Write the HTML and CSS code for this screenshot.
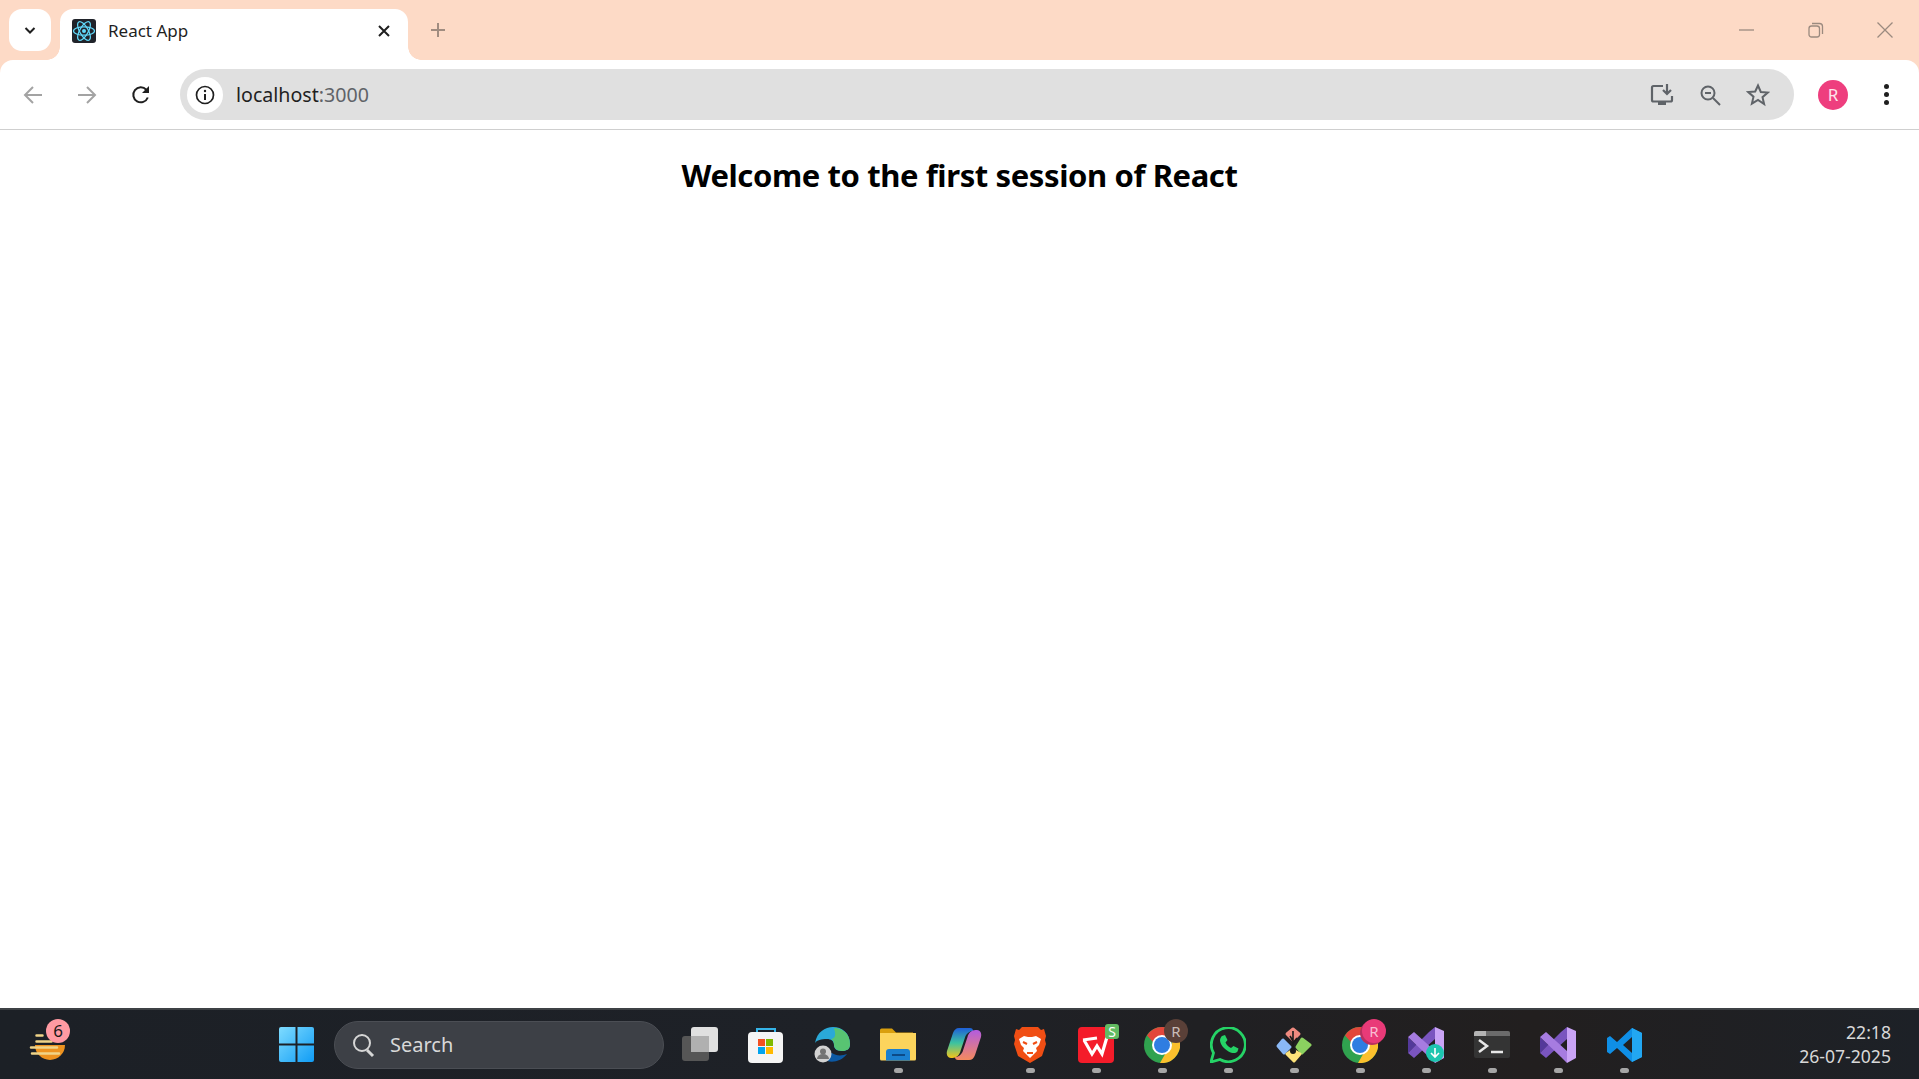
FILE: index.html
```html
<!DOCTYPE html>
<html lang="en">
<head>
    <meta charset="UTF-8">
    <title>React App</title>
    <link rel="stylesheet" href="styles.css">
</head>
<body>
    <svg class="sprites" width="0" height="0">
        <symbol id="chrome" viewBox="0 0 36 36">
            <circle cx="18" cy="18" r="18" fill="#30a24f"/>
            <path d="M18 0a18 18 0 0 1 15.600 9H18a9 9 0 0 0-8.600 6.400L3 8.500A18 18 0 0 1 18 0z" fill="#e2463a"/>
            <path d="M33.600 9A18 18 0 0 1 16 35.900l7.600-13.200A9 9 0 0 0 26 9z" fill="#fbc02d"/>
            <circle cx="18" cy="18" r="10" fill="#fff"/>
            <circle cx="18" cy="18" r="8" fill="#2f7de1"/>
        </symbol>
        <symbol id="vs" viewBox="0 0 36 36">
            <path d="M0 10l8.400 8L0 26z" fill="#54399a"/>
            <path d="M0 26l6 5L27 12V0l-6 5z" fill="#7a55bf"/>
            <path d="M0 10l6-5 21 19v12l-6-6z" fill="#a67ce0"/>
            <path d="M27 0l9 4v27l-9 5z" fill="#caa4f6"/>
        </symbol>
    </svg>

    <div class="chrome">
        <header class="tabstrip">
            <button class="tab-search">
                <svg width="14" height="14" viewBox="0 0 14 14"><path d="M2.500 5L7 9.500 11.500 5" fill="none" stroke="#1f1f1f" stroke-width="2"/></svg>
            </button>
            <div class="tab">
                <svg class="favicon" width="24" height="24" viewBox="0 0 24 24">
                    <rect width="24" height="24" rx="3" fill="#20232a"/>
                    <g fill="none" stroke="#61dafb" stroke-width="1.200">
                        <ellipse cx="12" cy="12" rx="10.500" ry="4.200"/>
                        <ellipse cx="12" cy="12" rx="10.500" ry="4.200" transform="rotate(60 12 12)"/>
                        <ellipse cx="12" cy="12" rx="10.500" ry="4.200" transform="rotate(120 12 12)"/>
                    </g>
                    <circle cx="12" cy="12" r="2" fill="#61dafb"/>
                </svg>
                <span class="tab-title">React App</span>
                <svg class="tab-close" width="12" height="12" viewBox="0 0 12 12"><path d="M1 1l10 10M11 1L1 11" stroke="#1f1f1f" stroke-width="2"/></svg>
            </div>
            <svg class="new-tab" width="16" height="16" viewBox="0 0 16 16"><path d="M8 1v14M1 8h14" stroke="#a08c80" stroke-width="2"/></svg>
            <div class="window-btns">
                <svg width="16" height="16" viewBox="0 0 16 16"><path d="M0 8h15" stroke="#9b8a7f" stroke-width="1.300"/></svg>
                <svg width="16" height="16" viewBox="0 0 16 16"><rect x="1" y="4" width="10.500" height="11" rx="2.500" fill="none" stroke="#9b8a7f" stroke-width="1.300"/><path d="M4 1.500h7.500a3 3 0 0 1 3 3V12" fill="none" stroke="#9b8a7f" stroke-width="1.300"/></svg>
                <svg width="16" height="16" viewBox="0 0 16 16"><path d="M.5.500l15 15M15.500.500l-15 15" stroke="#9b8a7f" stroke-width="1.300"/></svg>
            </div>
        </header>

        <nav class="toolbar">
            <svg class="nav-icon" width="20" height="20" viewBox="0 0 20 20"><path d="M19 10H2M10 2l-8 8 8 8" fill="none" stroke="#a3a3a3" stroke-width="2"/></svg>
            <svg class="nav-icon" width="20" height="20" viewBox="0 0 20 20"><path d="M1 10h17M10 2l8 8-8 8" fill="none" stroke="#a3a3a3" stroke-width="2"/></svg>
            <svg class="nav-icon" width="20" height="20" viewBox="0 0 20 20"><path d="M16.800 12.500A7.500 7.500 0 1 1 15.300 4.700L17 6.500" fill="none" stroke="#1f1f1f" stroke-width="2"/><path d="M18 1v7h-7z" fill="#1f1f1f"/></svg>
            <div class="omnibox">
                <span class="site-info">
                    <svg width="20" height="20" viewBox="0 0 20 20"><circle cx="10" cy="10" r="8.500" fill="none" stroke="#1f1f1f" stroke-width="1.700"/><path d="M10 9v6" stroke="#1f1f1f" stroke-width="2"/><circle cx="10" cy="6" r="1.200" fill="#1f1f1f"/></svg>
                </span>
                <span class="url">localhost<span class="url-port">:3000</span></span>
                <span class="omni-actions">
                    <svg width="24" height="24" viewBox="0 0 24 24"><path d="M13 3H3.500A1.500 1.500 0 0 0 2 4.500V17A1.500 1.500 0 0 0 3.500 18.500h17A1.500 1.500 0 0 0 22 17v-4" fill="none" stroke="#5f6368" stroke-width="2.200"/><path d="M8 18h8v4H8z" fill="#5f6368"/><path d="M17 1v9M13 7l4 4 4-4" fill="none" stroke="#5f6368" stroke-width="2.200"/></svg>
                    <svg width="22" height="22" viewBox="0 0 22 22"><circle cx="9" cy="9" r="6.500" fill="none" stroke="#5f6368" stroke-width="2"/><path d="M14 14l7 7" stroke="#5f6368" stroke-width="2"/><path d="M6 9h6" stroke="#5f6368" stroke-width="2"/></svg>
                    <svg width="24" height="24" viewBox="0 0 24 24"><path d="M12 2.500l2.800 6.500 7 .600-5.300 4.600 1.600 6.900L12 17l-6.100 3.600 1.600-6.900-5.300-4.600 7-.600z" fill="none" stroke="#5f6368" stroke-width="2"/></svg>
                </span>
            </div>
            <span class="avatar">R</span>
            <span class="menu-dots"><i></i><i></i><i></i></span>
        </nav>
    </div>

    <main class="page">
        <h1>Welcome to the first session of React</h1>
    </main>

    <footer class="taskbar">
        <div class="weather">
            <svg width="36" height="36" viewBox="0 0 36 36">
                <path d="M6 18h30a15 15 0 0 1-30 0z" fill="#ed9320"/>
                <path d="M7.500 8.500h6M7.500 14.500h15M2 20.500h26M3 26.500h27" stroke="#f0d488" stroke-width="2.500" stroke-linecap="round"/>
            </svg>
            <span class="weather-badge">6</span>
        </div>
        <svg class="start" width="35" height="35" viewBox="0 0 35 35">
            <defs><linearGradient id="win" x1="0" y1="0" x2="1" y2="1"><stop offset="0" stop-color="#7fdcff"/><stop offset="1" stop-color="#109cf5"/></linearGradient></defs>
            <path d="M2 0h14.500v16.500H0V2a2 2 0 0 1 2-2zM18.500 0H33a2 2 0 0 1 2 2v14.500H18.500zM0 18.500h16.500V35H2a2 2 0 0 1-2-2zM18.500 18.500H35V33a2 2 0 0 1-2 2H18.500z" fill="url(#win)"/>
        </svg>
        <div class="search">
            <svg width="24" height="26" viewBox="0 0 24 26"><circle cx="10" cy="11" r="8" fill="none" stroke="#d6d6d6" stroke-width="2"/><path d="M15 18l6 6" stroke="#d6d6d6" stroke-width="3"/></svg>
            <span>Search</span>
        </div>
        <div class="apps">
            <div class="app">
                <svg width="36" height="36" viewBox="0 0 36 36"><rect y="9" width="27" height="25" rx="3" fill="#565656"/><rect x="9" width="27" height="25" rx="3" fill="#e0e0e0"/><rect x="9" y="9" width="18" height="16" fill="#b0b0b0"/></svg>
            </div>
            <div class="app">
                <svg width="36" height="36" viewBox="0 0 36 36"><path d="M9 8V2h18v6" fill="none" stroke="#35b4e8" stroke-width="2"/><rect y="5" width="35" height="31" rx="4" fill="#f5f5f5"/><path d="M10 12h7v7h-7z" fill="#f25022"/><path d="M18 12h7v7h-7z" fill="#7fba00"/><path d="M10 20h7v7h-7z" fill="#00a4ef"/><path d="M18 20h7v7h-7z" fill="#ffb900"/></svg>
            </div>
            <div class="app">
                <svg width="36" height="36" viewBox="0 0 36 36"><path d="M1 16C3 5 11 0 19 0c9 0 17 6 17 17 0 5-3 7-8 7-6 0-8-3-8-6 0-4-3-6-7-6-6 0-10 1-12 4z" fill="#2aa9d8"/><path d="M20 1c9 0 16 6 16 16 0 5-3 7-8 7-5 0-8-3-8-6 0-3-1-5-3-6 6-1 4-7 3-11z" fill="#58c472"/><path d="M9 32c7 5 18 3 24-5-5 2-11 2-15-1-6 1-9 3-9 6z" fill="#0c59a4"/><circle cx="9" cy="27" r="8.500" fill="#d2d2d2"/><circle cx="9" cy="24.500" r="3" fill="#737373"/><path d="M3 32a6 5 0 0 1 12 0z" fill="#737373"/></svg>
            </div>
            <div class="app running">
                <svg width="36" height="36" viewBox="0 0 36 36"><path d="M0 3a1.500 1.500 0 0 1 1.500-1.500H12l4 4h17V30H0z" fill="#d99f0e"/><path d="M0 6h36v26a1.500 1.500 0 0 1-1.500 1.500h-33A1.500 1.500 0 0 1 0 32z" fill="#fcd45c"/><path d="M6 33.500V25a3 3 0 0 1 3-3h18a3 3 0 0 1 3 3v8.500z" fill="#1b80d0"/><path d="M12 28h13" stroke="#0c4a87" stroke-width="2"/></svg>
            </div>
            <div class="app">
                <svg width="36" height="36" viewBox="0 0 36 36">
                    <defs>
                        <linearGradient id="cop1" x1="0" y1="0" x2="0" y2="1"><stop offset="0" stop-color="#1f5fd8"/><stop offset=".5" stop-color="#3cc3a0"/><stop offset="1" stop-color="#f5c518"/></linearGradient>
                        <linearGradient id="cop2" x1="0" y1="0" x2="0" y2="1"><stop offset="0" stop-color="#f58a5e"/><stop offset="1" stop-color="#b25ce0"/></linearGradient>
                    </defs>
                    <path d="M13 1h11c2 0 3 1 3 3-3 0-6 2-7.500 5l-5 15c-1 4-4 7-8 7H5c-3 0-5-3-4-7L7 6c1-3 3-5 6-5z" fill="url(#cop1)"/>
                    <path d="M13 1h11c2 0 3 1 3 3-3 0-6 2-7.500 5l-5 15c-1 4-4 7-8 7H5c-3 0-5-3-4-7L7 6c1-3 3-5 6-5z" fill="url(#cop2)" transform="rotate(180 18 17)"/>
                </svg>
            </div>
            <div class="app running">
                <svg width="32" height="36" viewBox="0 0 32 36"><path d="M8 0h16l3 3 3-1 2 7-1 4 1 4-4 12-12 7-12-7L0 17l1-4-1-4 2-7 3 1z" fill="#f04e14"/><path d="M5 12l5-3 4 1h4l4-1 5 3-2 6-3 3 1 3-7 7-7-7 1-3-3-3z" fill="#fff"/><path d="M9 15l4 2M23 15l-4 2M13 26h6" stroke="#f04e14" stroke-width="2"/></svg>
            </div>
            <div class="app running">
                <svg width="36" height="36" viewBox="0 0 36 36"><rect width="36" height="36" rx="4" fill="#f41c2a"/><path d="M5 13l14-2M6 13l8 14 5-8 5 8 5-17" fill="none" stroke="#fff" stroke-width="3.200"/></svg>
                <span class="wps-s">S</span>
            </div>
            <div class="app running">
                <svg width="36" height="36"><use href="#chrome"/></svg>
                <span class="profile-badge brown">R</span>
            </div>
            <div class="app running">
                <svg width="36" height="36" viewBox="0 0 36 36"><path d="M1 35l2.500-9A17 17 0 1 1 10 32.500z" fill="none" stroke="#25d366" stroke-width="2.800"/><path d="M12 9l3-1 2.500 5-2 2.500c1 2.500 3 4.500 5.500 5.500l2.500-2 5 2.500-1 3c-2 2-5 2-9 0-5-3-8-7-8.500-11 0-2 1-3.500 2-4.500z" fill="#25d366"/></svg>
            </div>
            <div class="app running">
                <svg width="36" height="36" viewBox="0 0 36 36">
                    <g stroke-width="3" stroke-linejoin="round">
                        <path d="M11 7l6-5 6 5-6 6z" fill="#ef8a80" stroke="#ef8a80"/>
                        <path d="M2 19l5-6 7 7-6 6z" fill="#8ab8f5" stroke="#8ab8f5"/>
                        <path d="M26 12l8 6-8 8-5-6z" fill="#8bd160" stroke="#8bd160"/>
                        <path d="M11 27l6-4 7 4-6 7z" fill="#fde27a" stroke="#fde27a"/>
                    </g>
                    <path d="M17 4v20M14 9l3 5M21 11l-4 5" stroke="#1a1a1a" stroke-width="1.600" fill="none"/>
                    <circle cx="17" cy="24" r="3" fill="#1a1a1a"/>
                </svg>
            </div>
            <div class="app running">
                <svg width="36" height="36"><use href="#chrome"/></svg>
                <span class="profile-badge pink">R</span>
            </div>
            <div class="app running">
                <svg width="36" height="36"><use href="#vs"/></svg>
                <span class="vs-update">
                    <svg width="12" height="12" viewBox="0 0 12 12"><path d="M6 1v9M2 6l4 4 4-4" fill="none" stroke="#fff" stroke-width="1.600"/></svg>
                </span>
            </div>
            <div class="app running">
                <svg width="36" height="36" viewBox="0 0 36 36"><rect y="4" width="36" height="27" rx="2" fill="#343434"/><path d="M2 4h10v5H0V6a2 2 0 0 1 2-2z" fill="#b4b4b4"/><path d="M12 4h22a2 2 0 0 1 2 2v3H12z" fill="#6b6b6b"/><path d="M5 13l8 6-8 6" fill="none" stroke="#e8e8e8" stroke-width="2.500"/><path d="M17 25h12" stroke="#e8e8e8" stroke-width="2.500"/></svg>
            </div>
            <div class="app running">
                <svg width="36" height="36"><use href="#vs"/></svg>
            </div>
            <div class="app running">
                <svg width="36" height="36" viewBox="0 0 36 36"><path d="M26 1l10 5v24l-10 5-15-14-7 6-3-2V11l3-2 7 6zM26 10l-9 8 9 8z" fill="#0f8fe6" fill-rule="evenodd"/><path d="M26 1l10 5v24l-10 5z" fill="#22a7f2"/></svg>
            </div>
        </div>
        <div class="clock">
            <div>22:18</div>
            <div>26-07-2025</div>
        </div>
    </footer>
</body>
</html>
```

FILE: styles.css
```css
* {
    box-sizing: border-box;
}
html, body {
    height: 100%;
}
body {
    margin: 0;
    display: flex;
    flex-direction: column;
    overflow: hidden;
    background: white;
    font-family: "Noto Sans", Arial, sans-serif;
}
.sprites {
    display: none;
}

/* browser tabs */
.chrome {
    flex: none;
    background: #fddac6;
}
.tabstrip {
    height: 60px;
    display: flex;
    align-items: flex-start;
    padding: 9px 0 0 9px;
}
.tab-search {
    width: 42px;
    height: 42px;
    background: white;
    border: none;
    border-radius: 13px;
    display: flex;
    align-items: center;
    justify-content: center;
    padding: 0;
}
.tab {
    width: 348px;
    height: 51px;
    margin-left: 9px;
    background: white;
    border-radius: 13px 13px 0 0;
    display: flex;
    align-items: center;
    padding: 0 18px 8px 12px;
    position: relative;
}
.tab::before,
.tab::after {
    content: "";
    position: absolute;
    bottom: 0;
    width: 13px;
    height: 13px;
}
.tab::before {
    left: -13px;
    background: radial-gradient(circle at 0 0, transparent 12.500px, white 13px);
}
.tab::after {
    right: -13px;
    background: radial-gradient(circle at 100% 0, transparent 12.500px, white 13px);
}
.favicon {
    flex: none;
}
.tab-title {
    margin-left: 12px;
    font-size: 17px;
    color: #1f1f1f;
    flex: 1;
}
.new-tab {
    margin: 13px 0 0 22px;
}
.window-btns {
    margin-left: auto;
    display: flex;
    gap: 53px;
    padding: 13px 26px 0 0;
}

/* address bar */
.toolbar {
    height: 70px;
    background: white;
    border-bottom: 1px solid #cfcfcf;
    border-radius: 13px 13px 0 0;
    display: flex;
    align-items: center;
    padding-left: 23px;
}
.nav-icon {
    margin-right: 34px;
}
.nav-icon:nth-child(3) {
    margin-right: 29px;
}
.omnibox {
    width: 1614px;
    height: 51px;
    background: #e0e0e0;
    border-radius: 26px;
    display: flex;
    align-items: center;
    padding-left: 7px;
}
.site-info {
    width: 36px;
    height: 36px;
    background: white;
    border-radius: 50%;
    display: flex;
    align-items: center;
    justify-content: center;
}
.url {
    margin-left: 13px;
    font-size: 19.600px;
    color: #1f1f1f;
}
.url-port {
    color: #5f6368;
}
.omni-actions {
    margin-left: auto;
    display: flex;
    align-items: center;
    gap: 25px;
    padding-right: 24px;
}
.avatar {
    width: 30px;
    height: 30px;
    margin-left: 24px;
    background: #ee3e7e;
    border-radius: 50%;
    color: #ffe3ec;
    font-size: 17px;
    display: flex;
    align-items: center;
    justify-content: center;
}
.menu-dots {
    margin-left: 36px;
    display: flex;
    flex-direction: column;
    gap: 3px;
}
.menu-dots i {
    width: 5px;
    height: 5px;
    background: #1f1f1f;
    border-radius: 50%;
}

/* page content */
.page {
    flex: 1;
    background: white;
}
.page h1 {
    margin: 24px 0 0;
    font-size: 31px;
    font-weight: 700;
    letter-spacing: -0.400px;
    text-align: center;
    color: black;
}

/* windows taskbar */
.taskbar {
    height: 71px;
    flex: none;
    background: linear-gradient(90deg, #1c2026, #1e2127 45%, #221f1f 80%, #1d2127);
    border-top: 2px solid #3e4145;
    display: flex;
    align-items: center;
    position: relative;
    padding-left: 29px;
}
.weather {
    width: 36px;
    height: 36px;
    position: relative;
}
.weather-badge {
    position: absolute;
    top: -8px;
    left: 17px;
    width: 24px;
    height: 24px;
    background: #ff9aa2;
    border-radius: 50%;
    color: #1a1a1a;
    font-size: 17px;
    text-align: center;
    line-height: 24px;
}
.start {
    margin-left: 214px;
}
.search {
    width: 330px;
    height: 48px;
    margin-left: 20px;
    background: #3d4046;
    border: 1px solid #4b4e54;
    border-radius: 24px;
    display: flex;
    align-items: center;
    gap: 14px;
    padding-left: 17px;
    color: #d8d8d8;
    font-size: 20px;
}
.apps {
    display: flex;
    margin-left: 3px;
}
.app {
    width: 66px;
    height: 69px;
    position: relative;
    display: flex;
    align-items: center;
    justify-content: center;
}
.app.running::after {
    content: "";
    position: absolute;
    left: 29px;
    bottom: 6px;
    width: 9px;
    height: 5px;
    background: #a6a6a6;
    border-radius: 3px;
}
.profile-badge {
    position: absolute;
    top: 9px;
    left: 35px;
    width: 24px;
    height: 24px;
    border-radius: 50%;
    font-size: 15px;
    text-align: center;
    line-height: 24px;
}
.profile-badge.brown {
    background: #5a4038;
    color: #c9bdb8;
}
.profile-badge.pink {
    background: #e93a78;
    color: #f9bdd2;
    box-shadow: -2px 2px 0 #b8305f;
}
.wps-s {
    position: absolute;
    top: 14px;
    left: 42px;
    width: 14px;
    height: 15px;
    background: #62bb62;
    border-radius: 3px;
    color: white;
    font-size: 14px;
    line-height: 15px;
    text-align: center;
}
.vs-update {
    position: absolute;
    top: 34px;
    left: 33px;
    width: 18px;
    height: 18px;
    background: #1dc6b0;
    border-radius: 50%;
    display: flex;
    align-items: center;
    justify-content: center;
}
.clock {
    position: absolute;
    right: 28px;
    top: 10px;
    color: #d8d8d8;
    font-size: 17.600px;
    line-height: 24px;
    text-align: right;
}
```
